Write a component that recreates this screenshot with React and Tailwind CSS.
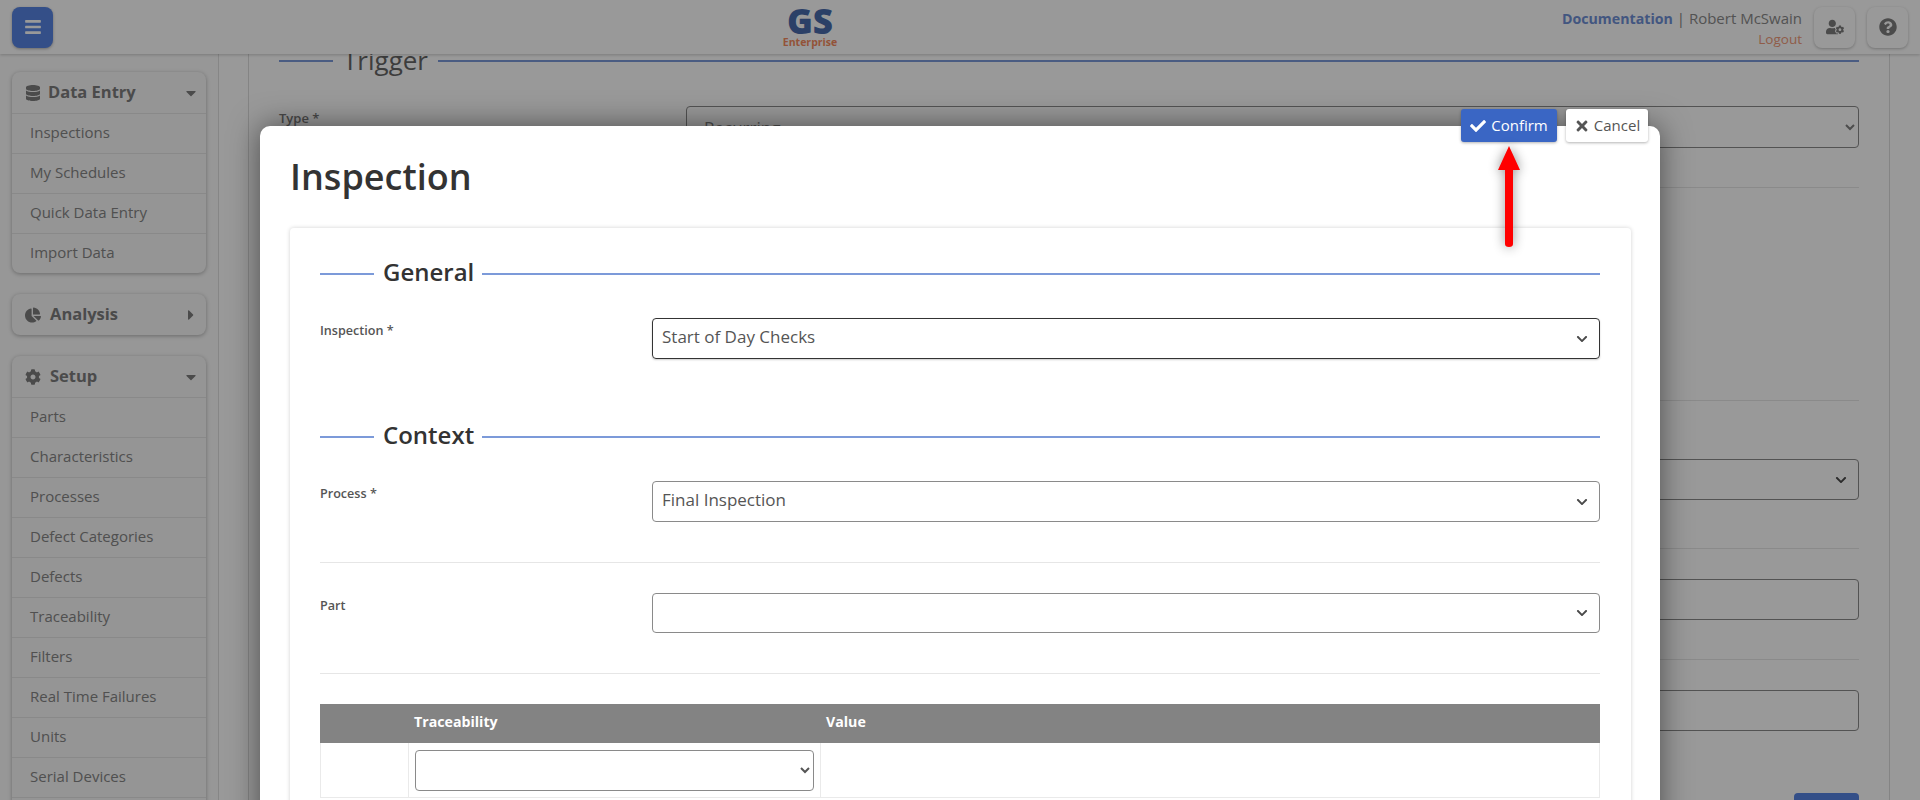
import React from "react";
import { FaBars, FaDatabase, FaChartPie, FaCog, FaCaretDown, FaCaretRight, FaUserCog, FaQuestionCircle, FaCheck, FaTimes, FaChevronDown } from "react-icons/fa";

const font = "font-['Open_Sans','Liberation_Sans',sans-serif]";

function NavCard({ icon, title, open, items, gap }) {
  return (
    <div className="mx-[12px] w-[194px] rounded-[8px] bg-[#f8f8f8] shadow-[0_1px_4px_rgba(0,0,0,0.3)] mb-[21px]">
      <div className="flex h-[41px] items-center pl-[12px] pr-[7px] text-[#7d7d7d]">
        <span className="flex w-[18px] justify-center text-[16px]">{icon}</span>
        <span className={`${gap} text-[16.5px] font-bold leading-[20px] -mt-[2px]`}>{title}</span>
        <span className="ml-auto text-[16px]">{open ? <FaCaretDown /> : <FaCaretRight />}</span>
      </div>
      {items && items.map((t) => (
        <div key={t} className="flex h-[40px] items-center border-t border-[#e4e4e4] pb-[3px] pl-[18px] text-[15px] text-[#858585]">{t}</div>
      ))}
    </div>
  );
}

function Heading({ children, className = "" }) {
  return (
    <div className={`flex h-[30px] items-center ${className}`}>
      <div className="h-[2px] w-[54px] bg-[#7c9ad9]" />
      <div className="-mt-[4px] ml-[9px] text-[24px] font-semibold leading-[30px] text-[#333]">{children}</div>
      <div className="ml-[8px] h-[2px] flex-1 bg-[#7c9ad9]" />
    </div>
  );
}

function BigSelect({ value, className = "", border = "border-[#8a8a8a]" }) {
  return (
    <div className={`relative ${className}`}>
      <select defaultValue={value} className={`h-full w-full appearance-none rounded-[4px] border ${border} bg-transparent pb-[3px] pl-[9px] text-[17px] text-[#555]`}>
        <option>{value}</option>
      </select>
      <FaChevronDown className="pointer-events-none absolute right-[12px] top-1/2 -translate-y-1/2 text-[12px] text-[#4a4a4a]" />
    </div>
  );
}

function Row({ label, value, focused, height = "h-[41px]" }) {
  return (
    <div className="flex">
      <div className="w-[332px] pt-[5px] text-[12.6px] font-semibold leading-[16px] text-[#555]">{label}</div>
      <BigSelect value={value} className={`flex-1 ${height}`} border={focused ? "border-[#333] shadow-[0_1px_2px_rgba(0,0,0,0.2)]" : "border-[#8a8a8a]"} />
    </div>
  );
}

export default function App() {
  return (
    <div className={`relative h-screen w-full overflow-hidden bg-white text-[#555] ${font}`}>
      {/* header */}
      <header className="relative z-10 flex h-[54px] items-center bg-white pl-[12px] pr-[12px] shadow-[0_1px_3px_rgba(0,0,0,0.2)]">
        <button className="flex h-[41px] w-[41px] items-center justify-center rounded-[8px] bg-[#5784e3] text-[18px] text-white shadow-[0_1px_3px_rgba(0,0,0,0.3)]"><FaBars /></button>
        <div className="absolute left-[783px] top-[5px] flex w-[54px] flex-col items-center">
          <span className="text-[35px] font-extrabold leading-[32px] text-[#496bac]">GS</span>
          <span className="text-[10.5px] font-bold leading-[10px] text-[#f58a5e]">Enterprise</span>
        </div>
        <div className="ml-auto mr-[12px] mt-[3px] text-right text-[15px] leading-[20px]">
          <div className="whitespace-nowrap"><span className="text-[14.2px] font-bold text-[#6f8fd6]">Documentation</span> <span className="text-[#808080]">|</span> <span className="text-[#8a8a8a]">Robert McSwain</span></div>
          <div className="text-[13.5px] text-[#f09a78]">Logout</div>
        </div>
        <button className="flex h-[41px] w-[41px] items-center justify-center rounded-[8px] bg-white text-[18px] text-[#7d7d7d] shadow-[0_1px_3px_rgba(0,0,0,0.25)]"><FaUserCog /></button>
        <button className="ml-[12px] flex h-[41px] w-[41px] items-center justify-center rounded-[8px] bg-white text-[18px] text-[#7d7d7d] shadow-[0_1px_3px_rgba(0,0,0,0.25)]"><FaQuestionCircle /></button>
      </header>

      <div className="flex">
        {/* sidebar */}
        <aside className="w-[219px] shrink-0 border-r border-[#e0e0e0] bg-[#fcfcfc] pt-[18px]">
          <NavCard icon={<FaDatabase />} title="Data Entry" open gap="ml-[6px]" items={["Inspections", "My Schedules", "Quick Data Entry", "Import Data"]} />
          <NavCard icon={<FaChartPie />} title="Analysis" gap="ml-[8px]" />
          <NavCard icon={<FaCog />} title="Setup" open gap="ml-[8px]" items={["Parts", "Characteristics", "Processes", "Defect Categories", "Defects", "Traceability", "Filters", "Real Time Failures", "Units", "Serial Devices", "\u00a0"]} />
        </aside>

        {/* page behind the dialog */}
        <main className="-mt-[8px] ml-[29px] mr-[30px] flex-1 border-x border-[#dcdcdc] bg-white px-[30px]">
          <div className="flex h-[30px] items-center">
            <div className="h-[2px] w-[54px] bg-[#7c9ad9]" />
            <div className="-mt-[3px] ml-[10px] text-[26px] leading-[30px] text-[#666]">Trigger</div>
            <div className="ml-[10px] h-[2px] flex-1 bg-[#7c9ad9]" />
          </div>
          <div className="mt-[30px] flex">
            <div className="w-[407px] pt-[4px] text-[13px] font-semibold leading-[16px] text-[#7a7a7a]">Type *</div>
            <select defaultValue="Recurring" className="h-[42px] flex-1 rounded-[4px] border border-[#8a8a8a] pl-[13px] text-[17px] text-[#808080]"><option>Recurring</option></select>
          </div>
          <div className="mt-[39px] h-px bg-[#e6e6e6]" />
          <div className="mt-[212px] h-px bg-[#e6e6e6]" />
          <BigSelect value="" className="mt-[58px] h-[41px]" />
          <div className="mt-[48px] h-px bg-[#e6e6e6]" />
          <div className="mt-[30px] h-[41px] rounded-[4px] border border-[#8a8a8a]" />
          <div className="mt-[39px] h-px bg-[#e6e6e6]" />
          <div className="mt-[30px] h-[41px] rounded-[4px] border border-[#8a8a8a]" />
          <div className="ml-auto mt-[62px] h-[41px] w-[65px] rounded-[4px] bg-[#5784e3]" />
        </main>
      </div>

      {/* dim layer */}
      <div className="absolute inset-0 z-20 bg-black/40" />

      {/* dialog */}
      <div className="absolute left-[260px] top-[126px] z-30 w-[1400px] rounded-t-[10px] bg-white pl-[30px] pr-[29px] shadow-[0_0_30px_rgba(0,0,0,0.5)]">
        <div className="absolute right-[12px] top-[-17px] flex gap-[9px]">
          <button className="flex h-[33px] w-[96px] items-center justify-center gap-[5px] rounded-[3px] bg-[#3a66c4] text-[15px] font-medium text-white shadow-[0_1px_3px_rgba(0,0,0,0.3)]"><FaCheck className="text-[16px]" />Confirm</button>
          <button className="flex h-[33px] w-[82px] items-center justify-center gap-[4px] rounded-[3px] bg-white text-[15px] text-[#555] shadow-[0_1px_3px_rgba(0,0,0,0.3)]"><FaTimes className="text-[16px]" />Cancel</button>
        </div>
        <svg className="absolute left-[1236px] top-[20px] drop-shadow-[0_0_6px_rgba(0,0,0,0.45)]" width="26" height="104" viewBox="0 0 26 104">
          <path d="M13 0 L24 24 L17 24 L17 98 Q17 101 13 101 Q9 101 9 98 L9 24 L2 24 Z" fill="#ff0000" />
        </svg>

        <h1 className="mt-[29px] text-[36px] font-semibold leading-[44px] text-[#333]">Inspection</h1>

        <div className="mt-[29px] rounded-[4px] pb-[40px] pl-[30px] pr-[31px] pt-[31px] shadow-[0_0_4px_rgba(0,0,0,0.18)]">
          <Heading>General</Heading>
          <div className="mt-[29px]"><Row label="Inspection *" value="Start of Day Checks" focused /></div>
          <Heading className="mt-[63px]">Context</Heading>
          <div className="mt-[29px]"><Row label="Process *" value="Final Inspection" /></div>
          <div className="mt-[40px] h-px bg-[#e6e6e6]" />
          <div className="mt-[30px]"><Row label="Part" value="" height="h-[40px]" /></div>
          <div className="mt-[40px] h-px bg-[#e6e6e6]" />
          <div className="mt-[30px] flex h-[39px] items-center bg-[#838383] pb-[4px] text-[14.2px] font-bold text-white">
            <div className="w-[94px]" />
            <div className="w-[412px]">Traceability</div>
            <div>Value</div>
          </div>
          <div className="flex h-[55px] border-x border-b border-[#eaeaea]">
            <div className="w-[88px] border-r border-[#eaeaea]" />
            <div className="w-[412px] border-r border-[#eaeaea] px-[6px] pt-[7px]">
              <select className="h-[41px] w-full rounded-[4px] border border-[#8a8a8a]"><option></option></select>
            </div>
          </div>
        </div>
      </div>
    </div>
  );
}
